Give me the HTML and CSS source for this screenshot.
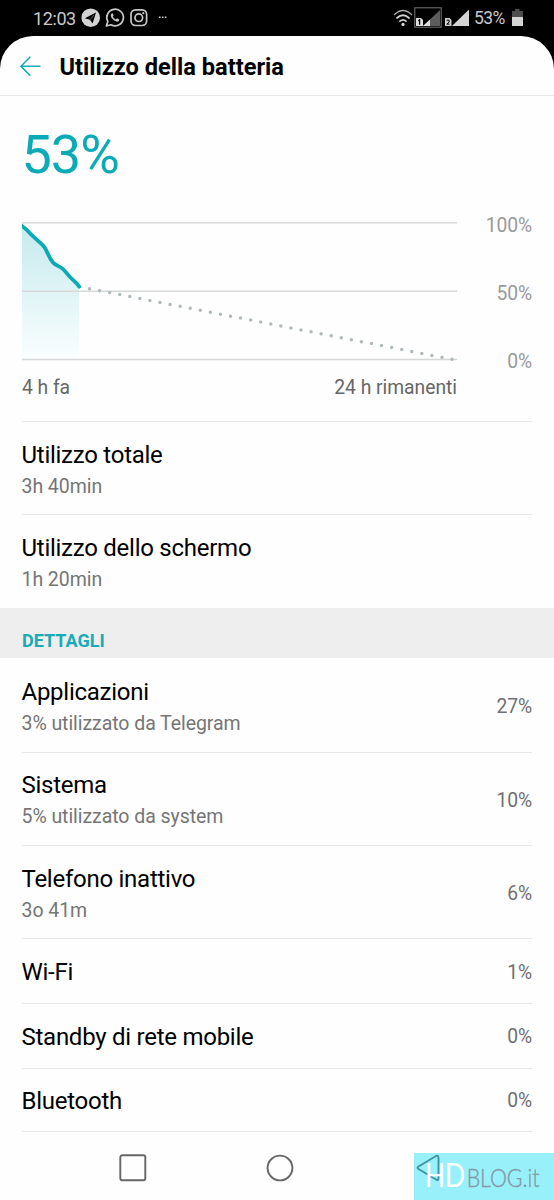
FILE: index.html
```html
<!DOCTYPE html>
<html lang="it">
<head>
<meta charset="utf-8">
<title>Utilizzo della batteria</title>
<link rel="stylesheet" href="styles.css">
</head>
<body>
<div class="phone">
  <div class="statusbar">
    <span class="clock">12:03</span>
    <svg class="notif" width="90" height="36" viewBox="78 0 90 36">
      <circle cx="90.7" cy="17.7" r="9.3" fill="#d4d4d4"/>
      <path d="M84.8 18.2L96 12.6L92.6 23.6L89.9 19.8Z" fill="#000"/>
      <path d="M89.9 19.8L94 15" stroke="#777" stroke-width=".8"/>
      <path d="M106.4 26L107.8 21.4A8.3 8.3 0 1 1 111 24.7Z" fill="none" stroke="#c8c8c8" stroke-width="1.7" stroke-linejoin="round"/>
      <path d="M111.6 13.4C110 15 110.8 17.2 113.2 19.6C115.6 22 117.9 22.3 119.1 20.8L119.2 19.4L117 18.3L115.9 19.4C114.6 18.9 113.4 17.8 112.8 16.5L113.6 15.4L112.7 13.3Z" fill="#c8c8c8"/>
      <rect x="131" y="9.9" width="15.6" height="15.6" rx="4.4" fill="none" stroke="#c8c8c8" stroke-width="1.7"/>
      <circle cx="138.8" cy="17.7" r="3.8" fill="none" stroke="#c8c8c8" stroke-width="1.7"/>
      <circle cx="143.3" cy="13.2" r="1.1" fill="#c8c8c8"/>
      <path d="M159 17.3h1.6M161.9 17.3h1.6M164.8 17.3h1.6" stroke="#ccc" stroke-width="1.5"/>
    </svg>
    <svg class="signals" width="80" height="36" viewBox="392 0 80 36">
      <g fill="none" stroke="#d0d0d0" stroke-width="1.8" stroke-linecap="round">
        <path d="M394.5 14.4Q403 6.4 411.5 14.4" stroke="#aaa" stroke-width="1.4"/>
        <path d="M397 18Q403 12.6 409 18"/>
        <path d="M400 21.2Q403 18.5 406 21.2"/>
      </g>
      <circle cx="403" cy="24.4" r="1.6" fill="#ddd"/>
      <rect x="414.8" y="7.8" width="26.4" height="19.4" fill="none" stroke="#777"/>
      <path d="M440 10V26H423Z" fill="#5c5c5c"/>
      <path d="M430 19.5V26H423Z" fill="#e0e0e0"/>
      <path d="M416 18h5l2 2v6h-7Z" fill="#e0e0e0"/>
      <path d="M418.3 20.8l1.3-1v5" stroke="#000" fill="none" stroke-width="1.3"/>
      <path d="M469 9.5V26H452Z" fill="#d4d4d4"/>
      <path d="M445 18h4.500l2 2v6H445Z" fill="#ccc"/>
      <path d="M446.600 20.200h2.500v1.900l-2.300 2h2.700" stroke="#000" fill="none" stroke-width="1"/>
    </svg>
    <span class="level">53%</span>
    <svg class="battery" width="12" height="36" viewBox="511 0 12 36">
      <path d="M512 17V11H515V9H519.500V11H523V17Z" fill="#4d4d4d"/>
      <path d="M512 17H523V26H512Z" fill="#d4d4d4"/>
    </svg>
  </div>

  <main class="screen">
    <header class="appbar">
      <svg class="back" width="21" height="21" viewBox="0 0 21 21"><path d="M10.300.8L1 10.300L10.300 19.800M1 10.300H20.500" fill="none" stroke="#18abb6" stroke-width="1.600"/></svg>
      <h1 class="title">Utilizzo della batteria</h1>
    </header>

    <section class="summary">
      <div class="percent">53%</div>
      <div class="chart">
        <svg class="plot" width="435" height="142" viewBox="22 220 435 142">
          <defs>
            <linearGradient id="fill" x1="0" y1="226" x2="0" y2="359" gradientUnits="userSpaceOnUse">
              <stop offset="0" stop-color="#c5eaee"/>
              <stop offset="1" stop-color="#fafefe"/>
            </linearGradient>
          </defs>
          <path d="M22 226L30 233.300L45 247.700C49 254 50 261 55 264.300C58 266.500 60 266.500 62.700 268.300L70 276.700L79 286V359H22Z" fill="url(#fill)"/>
          <path d="M22 222.800H457M22 291.200H457M22 359.500H457" stroke="#d6d8d8" stroke-width="1.400"/>
          <path d="M89.500 288.700L453 359.500" stroke="#b0babc" stroke-width="3.500" stroke-linecap="round" stroke-dasharray="0 10.260"/>
          <path d="M20 224.300L22 226C25 228 27.500 230.500 30 233.300L40 242.500C42 244.500 43.500 245.500 45 248C48 253 49 258 53 262.500C56 266 60 266 63 269C66 272 67.500 274.500 70 277C74 281 77 283 79.300 286.700" fill="none" stroke="#0aabb6" stroke-width="3.800" stroke-linecap="round"/>
        </svg>
        <div class="scale"><span>100%</span><span>50%</span><span>0%</span></div>
      </div>
      <div class="axis"><span>4 h fa</span><span>24 h rimanenti</span></div>
    </section>

    <ul class="list">
      <li class="row tall"><div><div class="name">Utilizzo totale</div><div class="sub">3h 40min</div></div></li>
      <li class="row tall"><div><div class="name">Utilizzo dello schermo</div><div class="sub">1h 20min</div></div></li>
    </ul>
    <h2 class="section">DETTAGLI</h2>
    <ul class="list details">
      <li class="row tall"><div><div class="name">Applicazioni</div><div class="sub">3% utilizzato da Telegram</div></div><span class="value">27%</span></li>
      <li class="row tall"><div><div class="name">Sistema</div><div class="sub">5% utilizzato da system</div></div><span class="value">10%</span></li>
      <li class="row tall"><div><div class="name">Telefono inattivo</div><div class="sub">3o 41m</div></div><span class="value">6%</span></li>
      <li class="row"><div class="name">Wi-Fi</div><span class="value">1%</span></li>
      <li class="row"><div class="name">Standby di rete mobile</div><span class="value">0%</span></li>
      <li class="row"><div class="name">Bluetooth</div><span class="value">0%</span></li>
    </ul>

    <nav class="navbar">
      <svg width="28" height="28" viewBox="0 0 28 28"><rect x="1.300" y="1.300" width="25" height="25" rx="2" fill="none" stroke="#666" stroke-width="1.900"/></svg>
      <svg width="28" height="28" viewBox="0 0 28 28"><circle cx="14" cy="14" r="12.400" fill="none" stroke="#666" stroke-width="1.900"/></svg>
    </nav>
    <div class="watermark">
      <svg class="nav-back" width="26" height="30" viewBox="0 0 26 30"><path d="M3.500 13.500L21 3Q23.500 2 23.500 5V25Q23.500 28 21 26.500L3.500 16Q1.500 14.700 3.500 13.500Z" fill="none" stroke="#3f95a1" stroke-width="1.900"/></svg>
      <span class="logo"><span class="hd">HD</span><span class="blog">BLOG.it</span></span>
    </div>
  </main>
</div>
</body>
</html>
```

FILE: styles.css
```css
* { box-sizing: border-box; }
body { margin: 0; background: #000; font-family: Roboto, sans-serif; }
.phone { width: 554px; height: 1200px; overflow: hidden; background: #000; }
.statusbar { display: flex; height: 36px; padding-left: 33px; line-height: 37px; font-size: 18px; color: #c8c8c8; }
.statusbar svg { flex: none; }
.clock { width: 45px; letter-spacing: -0.4px; }
.signals { margin-left: 224px; }
.level { width: 39px; padding-left: 2px; font-size: 17.5px; letter-spacing: -0.6px; }
.screen { position: relative; height: 1164px; background: #fefefe; border-radius: 33px 33px 0 0; overflow: hidden; }
.appbar { display: flex; align-items: center; gap: 18.5px; height: 60px; padding-left: 20px; border-bottom: 1px solid #e6e6e6; }
.back { margin-top: 1px; }
.title { margin: 2px 0 0; font-size: 23.6px; font-weight: 700; line-height: 30px; white-space: nowrap; color: #000; }
.summary { height: 325px; padding: 24px 22px 0; }
.percent { height: 64px; margin-left: -0.5px; line-height: 69px; font-size: 54px; letter-spacing: -1px; color: #0aabb6; }
.chart { display: flex; justify-content: space-between; margin-top: 36px; height: 142px; }
.scale { display: flex; flex-direction: column; justify-content: space-between; height: 160px; margin-top: -6.500px; line-height: 24px; font-size: 19.3px; letter-spacing: -0.1px; text-align: right; color: #999; }
.axis { display: flex; justify-content: space-between; width: 435px; margin-top: 14px; line-height: 24px; font-size: 19.3px; letter-spacing: -0.02px; color: #666; }
.list { margin: 0; padding: 0 22px; list-style: none; }
.row { display: flex; align-items: center; justify-content: space-between; height: 64.6px; padding-top: 2px; border-top: 1px solid #e8e8e8; }
.row.tall { height: 93.4px; padding-top: 3px; }
.details .row:first-child { border-top-color: transparent; }
.details .row:last-child { border-bottom: 1px solid #e8e8e8; }
.name { margin-left: -0.5px; line-height: 30px; font-size: 24px; letter-spacing: -0.26px; color: #000; white-space: nowrap; }
.sub { margin: 4px 0 0 -0.5px; line-height: 26px; font-size: 19.5px; letter-spacing: -0.06px; color: #757575; white-space: nowrap; }
.value { padding-top: 1px; font-size: 19.3px; letter-spacing: -0.1px; line-height: 26px; color: #707070; }
.section { height: 50.5px; margin: 0; padding: 20px 22px 0; background: #eee; color: #19abb6; font-size: 18px; font-weight: 700; line-height: 26px; }
.navbar { display: flex; gap: 119px; padding: 21.500px 0 0 119px; }
.watermark { position: absolute; right: 0; bottom: 0; width: 140px; height: 47px; background: #98f1fa; }
.nav-back { position: absolute; left: 1px; top: 0; }
.logo { position: absolute; left: 11px; top: 5px; display: flex; align-items: baseline; font-family: Lato, sans-serif; font-weight: 400; line-height: 34px; white-space: nowrap; transform: scaleX(0.82); transform-origin: left; }
.hd { color: #fff; font-size: 32px; }
.blog { margin-left: 2px; color: #8399a8; font-size: 26px; font-weight: 300; -webkit-text-stroke: 0.4px #8399a8; }
```
